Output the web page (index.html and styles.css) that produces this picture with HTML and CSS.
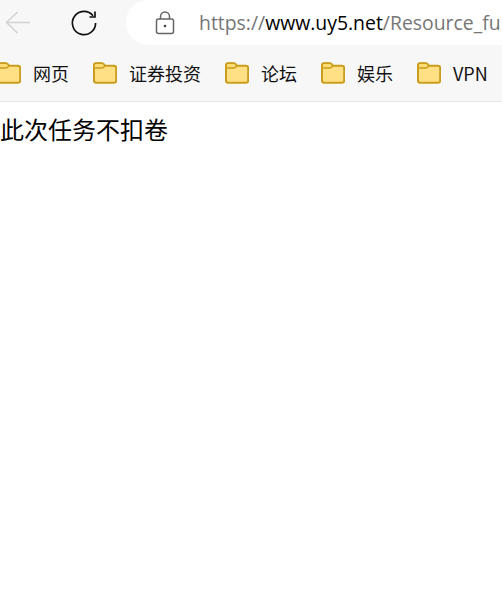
FILE: index.html
```html
<!DOCTYPE html>
<html lang="zh-CN">
    <head>
        <meta charset="utf-8">
        <meta name="viewport" content="width=device-width,initial-scale=1" />
        <title>此次任务不扣卷</title>
        <link rel="stylesheet" href="styles.css">
    </head>
    <body>
        <div class="toolbar">
            <svg class="back" width="28" height="24" viewBox="0 0 28 24">
                <path d="M25 11.5H1.5M12.5 1 1.5 11.5 12.5 22" />
            </svg>
            <svg class="reload" width="28" height="28" viewBox="0 0 28 28">
                <path d="M23 6.7A11.6 11.6 0 1 0 25.6 14" />
                <path d="M25 2.5v5.5h-5.5" />
            </svg>
            <div class="address">
                <svg class="lock" width="20" height="24" viewBox="0 0 20 24">
                    <rect x="1.5" y="8" width="17" height="14.5" rx="2" />
                    <path d="M5.5 8V5.5a4.5 4.5 0 0 1 9 0V8" />
                    <circle cx="10" cy="15" r="1.3" />
                </svg>
                <span class="url">https://<b>www.uy5.net</b>/Resource_fu</span>
            </div>
        </div>
        <div class="bookmarks">
            <div class="mark"><svg class="folder" width="24" height="22" viewBox="0 0 24 22"><use href="#folder" /></svg>网页</div>
            <div class="mark"><svg class="folder" width="24" height="22" viewBox="0 0 24 22"><use href="#folder" /></svg>证券投资</div>
            <div class="mark"><svg class="folder" width="24" height="22" viewBox="0 0 24 22"><use href="#folder" /></svg>论坛</div>
            <div class="mark"><svg class="folder" width="24" height="22" viewBox="0 0 24 22"><use href="#folder" /></svg>娱乐</div>
            <div class="mark"><svg class="folder" width="24" height="22" viewBox="0 0 24 22"><use href="#folder" /></svg>VPN</div>
        </div>
        <p class="message">此次任务不扣卷</p>

        <svg class="defs" width="0" height="0">
            <symbol id="folder" viewBox="0 0 24 22">
                <path class="folder-body" d="M3.2 1.2h5.6c1.6 0 2.4 1.2 3.2 2.6h9c1.2 0 2.2 1 2.2 2.2v12.6c0 1.2-1 2.2-2.2 2.2H3.2C2 20.8 1 19.8 1 18.6V3.4C1 2.2 2 1.2 3.2 1.2Z" />
                <path class="folder-tab" d="M1 6V3.4C1 2.2 2 1.2 3.2 1.2h5.6c1.6 0 2.4 1.1 3.2 2.4-.8 1.3-1.8 2.4-3.2 2.4Z" />
            </symbol>
        </svg>
    </body>
</html>
```

FILE: styles.css
```css
html, body{
    margin: 0;
    padding: 0;
    background: #fff;
    overflow: hidden;
}
body{
    font-family: "Noto Sans CJK SC", "Open Sans", sans-serif;
    color: #000;
}
.toolbar{
    display: flex;
    align-items: center;
    height: 45px;
    background: #f7f7f7;
    padding-left: 5px;
}
.back{
    flex: none;
    fill: none;
    stroke: #d2d2d2;
    stroke-width: 1.5;
}
.reload{
    flex: none;
    margin-left: 37px;
    fill: none;
    stroke: #111;
    stroke-width: 1.7;
}
.address{
    flex: 1;
    min-width: 0;
    display: flex;
    align-items: center;
    height: 45px;
    margin-left: 28px;
    padding-left: 29px;
    background: #fff;
    border-radius: 22px 0 0 22px;
    overflow: hidden;
}
.lock{
    flex: none;
    fill: none;
    stroke: #666;
    stroke-width: 1.5;
}
.lock circle{
    fill: #444;
    stroke: none;
}
.url{
    margin-left: 24px;
    font-family: "Open Sans", sans-serif;
    font-size: 19.4px;
    color: #767676;
    white-space: nowrap;
}
.url b{
    font-weight: 400;
    color: #000;
}
.bookmarks{
    display: flex;
    align-items: center;
    gap: 24px;
    height: 56px;
    background: #f7f7f7;
    border-bottom: 1px solid #e6e6e6;
    white-space: nowrap;
}
.mark{
    flex: none;
    display: flex;
    align-items: center;
    gap: 12px;
    font-size: 18px;
    color: #111;
}
.mark:first-child{
    margin-left: -3px;
}
.folder-body{
    fill: #ffe084;
    stroke: #c99d1e;
    stroke-width: 2;
}
.folder-tab{
    fill: #ffdc74;
    stroke: #c99d1e;
    stroke-width: 1.6;
}
.message{
    margin: 9px 0 0;
    font-size: 24px;
    line-height: 36px;
}
.defs{
    display: block;
}
```
